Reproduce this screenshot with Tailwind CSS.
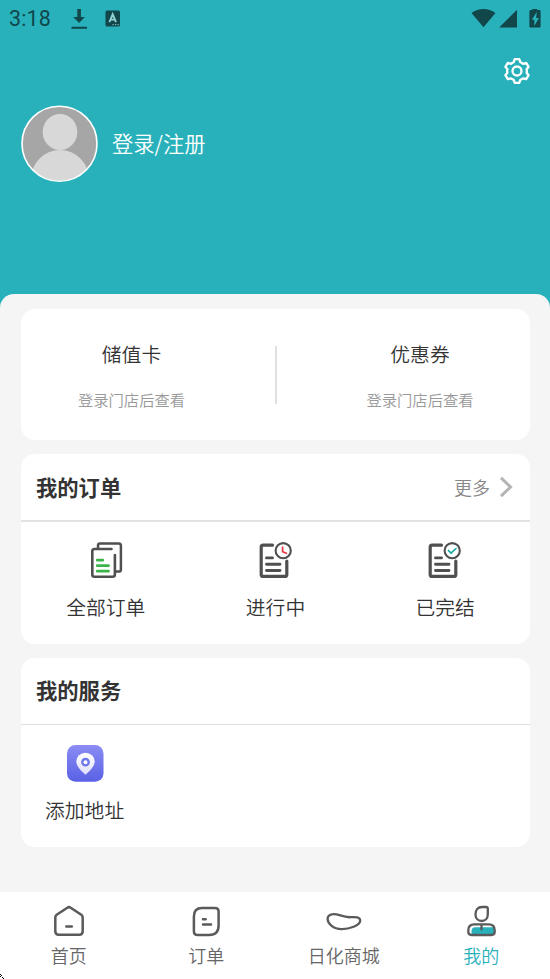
<!DOCTYPE html>
<html lang="zh-CN">
<head>
<meta charset="utf-8">
<title>我的</title>
<script src="https://cdn.jsdelivr.net/npm/@tailwindcss/browser@4"></script>
</head>
<body class="w-[550px] h-[979px] overflow-hidden bg-[#29b1bb] font-['Noto_Sans_CJK_SC',sans-serif] font-[350] text-[#333]">
<div class="relative flex h-[979px] flex-col">
  <header class="flex h-[294px] shrink-0 flex-col">
    <div class="flex h-[38px] items-center pl-[9px] pr-[9px] text-[#11474b]">
      <span class="w-[61px] font-['Roboto',sans-serif] text-[21.5px] font-normal leading-[38px] tracking-[0.1px]">3:18</span>
      <svg class="h-[22px] w-[18px]" viewBox="0 0 18 22" fill="currentColor"><path d="M7.3 1h3.6v8h4L9.1 15 3.2 9h4.1zM1.5 18.7H17V20.800H1.5z"/></svg>
      <svg class="ml-[17px] h-[18px] w-[16px]" viewBox="0 0 16 18"><rect x=".5" y=".5" width="14.500" height="16" rx="1.500" fill="currentColor"/><path d="M4.4 12.100 7.700 4.300l3.300 7.800M5.600 9.600h4.200" fill="none" stroke="#8fd0d5" stroke-width="1.900"/><path d="M7.500 14.700h1.300m1.200 0h1.300m1.200 0h1.300" stroke="#8fd0d5" stroke-width="1"/></svg>
      <svg class="ml-auto h-[20px] w-[70px]" viewBox="0 0 70 20" fill="currentColor"><path d="M.5 4.1C7.5-1.3 17.5-1.3 24.5 4.1L12.500 18.300zM46 .8V18.600H28.200z"/><path fill-rule="evenodd" d="M61.300-.9h5v1.800h2.200q1.100 0 1.100 1.100v15.400q0 1.100-1.100 1.100h-9q-1.100 0-1.100-1.100V2q0-1.100 1.100-1.100h1.800zM65.800 3l-5 7.700h2.500V17l4.600-8h-2.800z"/></svg>
    </div>
    <div class="flex h-[66px] justify-end pr-[19px] pt-[19px]">
      <svg class="h-[28px] w-[28px]" viewBox="0 0 28 28" fill="none" stroke="#fff" stroke-width="2.300" stroke-linejoin="round"><path d="M11.700 2.200h4.600l1 3q1.400 .5 2.700 1.600l3.200-1 2.400 4-2 2.400q.5 1.800 0 3.600l2 2.400-2.400 4-3.200-.9q-1.300 1.100-2.700 1.500l-1 3h-4.600l-1-3Q9.300 22.400 8 21.300l-3.200.9-2.400-4 2-2.400q-.5-1.800 0-3.600L2.400 9.800l2.400-4 3.200 1Q9.300 5.700 10.700 5.200z"/><circle cx="14" cy="14" r="4.500"/></svg>
    </div>
    <div class="flex items-center pl-[21px]">
      <svg class="h-[78px] w-[77px]" viewBox="0 0 77 78"><defs><clipPath id="avatar"><circle cx="38.500" cy="39.500" r="37.300"/></clipPath></defs><circle cx="38.500" cy="39.500" r="37.300" fill="#a6a6a6"/><g fill="#d8d8d8" clip-path="url(#avatar)"><ellipse cx="39" cy="28" rx="17.300" ry="18"/><ellipse cx="39" cy="77" rx="29.500" ry="31"/></g><circle cx="38.500" cy="39.700" r="37.500" fill="none" stroke="#fff" stroke-width="1.600"/></svg>
      <span class="ml-[14px] text-[21.3px] leading-[30px] text-white">登录/注册</span>
    </div>
  </header>

  <main class="flex grow flex-col gap-[14px] rounded-t-[14px] bg-[#f5f5f5] px-[21px] pt-[15px]">
    <section class="flex h-[131px] w-[509px] items-center rounded-[14px] bg-white">
      <div class="flex w-[221px] flex-col items-center">
        <span class="text-[19.8px] leading-[30px]">储值卡</span>
        <span class="mt-[18px] text-[15.3px] leading-[24px] text-[#999]">登录门店后查看</span>
      </div>
      <div class="ml-[33px] h-[58px] w-[2px] bg-[#e0e0e0]"></div>
      <div class="ml-auto flex w-[220px] flex-col items-center">
        <span class="text-[19.8px] leading-[30px]">优惠券</span>
        <span class="mt-[18px] text-[15.3px] leading-[24px] text-[#999]">登录门店后查看</span>
      </div>
    </section>

    <section class="h-[190px] w-[509px] rounded-[14px] bg-white">
      <div class="flex h-[68px] items-center border-b-2 border-[#e2e2e2] pl-[15px] pr-[17px]">
        <h2 class="pb-px text-[21.3px] font-bold leading-[30px]">我的订单</h2>
        <span class="ml-auto text-[18px] leading-[28px] text-[#888]">更多</span>
        <svg class="ml-[9px] h-[22px] w-[14px]" viewBox="0 0 14 22" fill="none" stroke="#b4b4b4" stroke-width="3"><path d="M2 1.800 11.500 11 2 20.200"/></svg>
      </div>
      <div class="grid grid-cols-3">
        <div class="flex flex-col items-center pt-[18px]">
          <svg class="h-[40px] w-[40px]" viewBox="0 0 40 40" fill="none" stroke="#505050" stroke-width="2.600" stroke-linecap="round" stroke-linejoin="round"><path d="M25.500 9H8.500Q6.300 9 6.300 11.200V34.500Q6.300 36.700 8.500 36.700H26.500Q28.900 36.700 28.900 34.500V15"/><path d="M12 8V5.500Q12 3.400 14 3.400H32.700Q34.900 3.400 34.900 5.500V29.500Q34.900 31.600 32.700 31.600H30" stroke-width="2.500"/><path d="M11.300 20.200h5.500M11.300 25.700H22.500M11.300 31.200H22.500" stroke="#3bb54a" stroke-width="2.800"/></svg>
          <span class="mt-[12px] text-[19.8px] leading-[30px]">全部订单</span>
        </div>
        <div class="flex flex-col items-center pt-[18px]">
          <svg class="h-[40px] w-[40px]" viewBox="0 0 40 40" fill="none" stroke="#505050" stroke-width="3.200" stroke-linecap="round" stroke-linejoin="round"><path d="M17.500 5.200H8.200Q6.200 5.200 6.200 7.200V34.400Q6.200 36.400 8.200 36.400H29.800Q31.800 36.400 31.800 34.400V21"/><path d="M11.500 17.900H17.500M11.500 24.200H25M11.500 30.500H25" stroke-width="2.900"/><circle cx="28.200" cy="10.700" r="7.600" stroke-width="2.100"/><path d="M27.600 7.200V11.700L31.500 13.300" stroke="#e83841" stroke-width="1.700"/></svg>
          <span class="mt-[12px] text-[19.8px] leading-[30px]">进行中</span>
        </div>
        <div class="flex flex-col items-center pt-[18px]">
          <svg class="h-[40px] w-[40px]" viewBox="0 0 40 40" fill="none" stroke="#505050" stroke-width="3.200" stroke-linecap="round" stroke-linejoin="round"><path d="M16.500 5.200H7.200Q5.200 5.200 5.200 7.200V34.400Q5.200 36.400 7.200 36.400H28.800Q30.800 36.400 30.800 34.400V21"/><path d="M10.500 17.900H16.500M10.500 24.200H24M10.500 30.500H24" stroke-width="2.900"/><circle cx="27.200" cy="10.700" r="7.600" stroke-width="2.100"/><path d="M23.400 10.500 26.100 13.200 31 8.500" stroke="#16aaa8" stroke-width="1.700"/></svg>
          <span class="mt-[12px] text-[19.8px] leading-[30px]">已完结</span>
        </div>
      </div>
    </section>

    <section class="h-[189px] w-[509px] rounded-[14px] bg-white">
      <div class="flex h-[67px] items-center border-b-[1.5px] border-[#dedede] pl-[15px]">
        <h2 class="pb-[2px] text-[21.3px] font-bold leading-[30px]">我的服务</h2>
      </div>
      <div class="grid grid-cols-4">
        <div class="flex flex-col items-center pt-[18px]">
          <svg class="h-[40px] w-[40px]" viewBox="0 0 40 40"><defs><linearGradient id="tile" x1="0" y1="0" x2="0" y2="1"><stop stop-color="#8b8cf3"/><stop offset="1" stop-color="#5961e5"/></linearGradient><linearGradient id="pin" x1="0" y1="0" x2="0" y2="1"><stop stop-color="#fff"/><stop offset="1" stop-color="#dedffb"/></linearGradient></defs><rect x="2" y="2" width="36.500" height="36.800" rx="8.500" fill="url(#tile)"/><path d="M20.500 31.800Q11.300 24 11.300 18.500a9.200 8.700 0 0 1 18.400 0Q29.700 24 20.500 31.800z" fill="url(#pin)"/><circle cx="20.500" cy="19.200" r="3.200" fill="#fff" stroke="#6f75ea" stroke-width="2.300"/></svg>
          <span class="mt-[12px] text-[19.8px] leading-[30px]">添加地址</span>
        </div>
      </div>
    </section>
  </main>

  <nav class="grid h-[87px] shrink-0 grid-cols-4 bg-white text-[18px] leading-[26px] text-[#666]">
    <div class="flex flex-col items-center pt-[10px]">
      <svg class="h-[40px] w-[40px]" viewBox="0 0 40 40" fill="none" stroke="#5a5a5a" stroke-width="2.500" stroke-linecap="round" stroke-linejoin="round"><path d="M18.300 5.700Q20 4.500 21.700 5.700L32.300 12.800Q33.700 13.800 33.700 15.500V29.300Q33.700 32.800 30.200 32.800H9.800Q6.300 32.800 6.300 29.300V15.500Q6.300 13.800 7.700 12.800z"/><path d="M17.300 24.600h5.500"/></svg>
      <span class="leading-[26px]">首页</span>
    </div>
    <div class="flex flex-col items-center pt-[10px]">
      <svg class="h-[40px] w-[40px]" viewBox="0 0 40 40" fill="none" stroke="#5a5a5a" stroke-width="2.500" stroke-linecap="round" stroke-linejoin="round"><path d="M16 6H29Q32.600 6 32.600 9.600V23.500Q32.600 33 23.100 33H11.500Q7.900 33 7.900 29.400V14.500Q7.900 6 16 6z"/><path d="M17 17.200h2.700M17 22.600h8"/></svg>
      <span class="leading-[26px]">订单</span>
    </div>
    <div class="flex flex-col items-center pt-[10px]">
      <svg class="h-[40px] w-[40px]" viewBox="0 0 40 40" fill="none" stroke="#5a5a5a" stroke-width="2.300" stroke-linejoin="round"><path d="M9 12.200C14 11.500 19 15.700 26.500 15.200C32 14.900 36 15 36.200 18.800C36.200 23.500 25 27.300 17.500 27.200C9 27.100 3.700 21 3.600 17.300C3.500 14.300 5.800 12.500 9 12.200z"/></svg>
      <span class="leading-[26px]">日化商城</span>
    </div>
    <div class="flex flex-col items-center pt-[10px] text-[#29b1bb]">
      <svg class="h-[40px] w-[40px]" viewBox="0 0 40 40" fill="none" stroke="#5a5a5a" stroke-width="2.300" stroke-linejoin="round" stroke-linecap="round"><path d="M10.500 32V29.500Q10.500 25.300 14.500 25.300H34V32z" fill="#29b1bb" stroke="none"/><path d="M21 5H25Q26.800 5 26.800 6.800V12.500C26.800 16.500 24 19 20.700 19S14.500 16.500 14.500 12.500C14.500 8 17 5 21 5z"/><path d="M13.300 22.300H27.700Q33.700 22.300 33.700 28.300V29.800Q33.700 33 30.500 33H10.500Q7.300 33 7.300 29.800V28.300Q7.300 22.300 13.300 22.300zM20.500 23V27.500"/></svg>
      <span class="leading-[26px]">我的</span>
    </div>
  </nav>
  <svg class="absolute bottom-0 left-0 h-[6px] w-[6px]" viewBox="0 0 6 6" shape-rendering="crispEdges" fill="#000"><path d="M0 1h1v1H0zM1 2h1v1H1zM2 4h1v1H2zM3 5h1v1H3zM0 3h1v1H0z"/></svg>
</div>
</body>
</html>
